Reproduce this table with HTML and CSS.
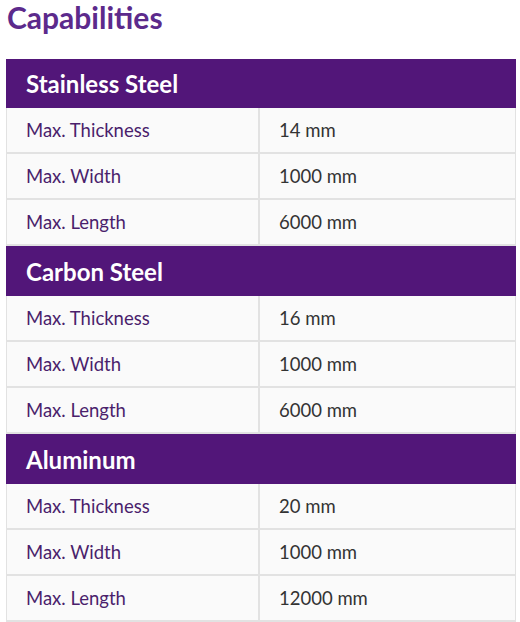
FILE: index.html
```html
<!DOCTYPE html>
<html>
<head>
<meta charset="utf-8">
<link rel="stylesheet" href="styles.css">
</head>
<body>
<div class="page">
  <h1 class="title">Capabilities</h1>
  <div class="table">
    <div class="group">Stainless Steel</div>
    <div class="row"><div class="label">Max. Thickness</div><div class="value">14 mm</div></div>
    <div class="row"><div class="label">Max. Width</div><div class="value">1000 mm</div></div>
    <div class="row"><div class="label">Max. Length</div><div class="value">6000 mm</div></div>
    <div class="group">Carbon Steel</div>
    <div class="row"><div class="label">Max. Thickness</div><div class="value">16 mm</div></div>
    <div class="row"><div class="label">Max. Width</div><div class="value">1000 mm</div></div>
    <div class="row"><div class="label">Max. Length</div><div class="value">6000 mm</div></div>
    <div class="group">Aluminum</div>
    <div class="row"><div class="label">Max. Thickness</div><div class="value">20 mm</div></div>
    <div class="row"><div class="label">Max. Width</div><div class="value">1000 mm</div></div>
    <div class="row"><div class="label">Max. Length</div><div class="value">12000 mm</div></div>
  </div>
</div>
</body>
</html>
```

FILE: styles.css
```css
html, body {
  margin: 0;
  padding: 0;
  background: #ffffff;
}
.page {
  padding: 0 4px 0 6px;
  font-family: "Lato", "Open Sans", sans-serif;
}
.title {
  margin: 0;
  height: 59px;
  padding-left: 1px;
  font-size: 30px;
  line-height: 34px;
  font-weight: 700;
  color: #5c2a8c;
}
.table {
  display: flex;
  flex-direction: column;
  border-left: 1px solid #e2e2e2;
  border-right: 1px solid #e2e2e2;
}
.group {
  height: 50px;
  display: flex;
  align-items: center;
  background: #521679;
  color: #ffffff;
  font-size: 24px;
  font-weight: 700;
  margin-left: -1px;
  margin-right: -1px;
  padding-left: 20px;
}
.group:first-child {
  height: 49px;
}
.row {
  display: grid;
  grid-template-columns: 253px 1fr;
  height: 44px;
  border-bottom: 2px solid #e2e2e2;
  background: #fafafa;
  font-size: 18.5px;
}
.label, .value {
  display: flex;
  align-items: center;
}
.label {
  padding-left: 19px;
  color: #4a1f6c;
  border-right: 2px solid #e2e2e2;
}
.value {
  padding-left: 19px;
  color: #333333;
}
```
